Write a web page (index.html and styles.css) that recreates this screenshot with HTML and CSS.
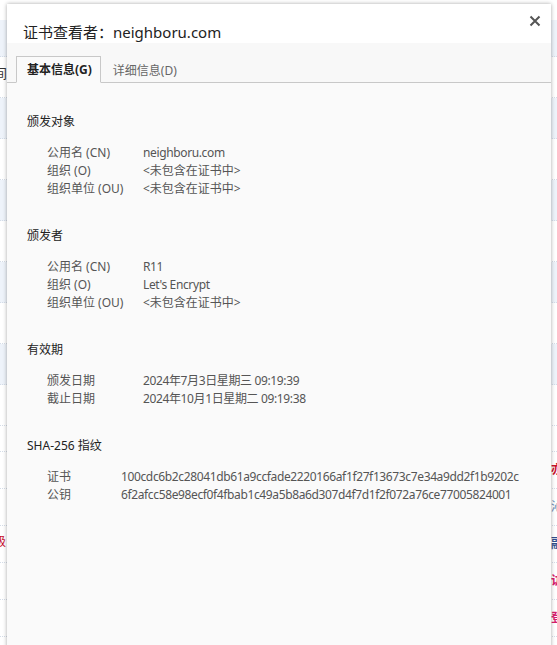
FILE: index.html
```html
<!DOCTYPE html>
<html>
<head>
  <title>证书查看者</title>
  <link rel="stylesheet" href="styles.css">
</head>
<body>
  <div class="page">
    <div class="row blue first"></div>
    <div class="row"><span class="cut">间</span></div>
    <div class="row blue"></div>
    <div class="row"></div>
    <div class="row blue"></div>
    <div class="row"></div>
    <div class="row blue"></div>
    <div class="row"></div>
    <div class="row blue"></div>
    <div class="row"></div>
    <div class="row spacer"></div>
    <div class="row small"><span class="tail red">亦</span></div>
    <div class="row small"><span class="tail blue-text">沁</span></div>
    <div class="row small"><span class="cut red">级</span><span class="tail navy">融</span></div>
    <div class="row small"><span class="tail pink">访</span></div>
    <div class="row small"><span class="tail pink">登</span></div>
  </div>

  <div class="dialog">
    <div class="dialog-head">
      <span class="title">证书查看者：neighboru.com</span>
      <svg class="close" width="12" height="12" viewBox="0 0 12 12">
        <path d="M1.5 1.5 L10.5 10.5 M10.5 1.5 L1.5 10.5" stroke="#555" stroke-width="2"/>
      </svg>
    </div>

    <div class="tabs">
      <div class="tab active">基本信息(G)</div>
      <div class="tab">详细信息(D)</div>
    </div>

    <div class="content">
      <div class="section">
        <div class="heading">颁发对象</div>
        <div class="rows">
          <div class="field"><span class="label">公用名 (CN)</span><span class="latin">neighboru.com</span></div>
          <div class="field"><span class="label">组织 (O)</span><span>&lt;未包含在证书中&gt;</span></div>
          <div class="field"><span class="label">组织单位 (OU)</span><span>&lt;未包含在证书中&gt;</span></div>
        </div>
      </div>

      <div class="section">
        <div class="heading">颁发者</div>
        <div class="rows">
          <div class="field"><span class="label">公用名 (CN)</span><span class="latin">R11</span></div>
          <div class="field"><span class="label">组织 (O)</span><span class="latin">Let's Encrypt</span></div>
          <div class="field"><span class="label">组织单位 (OU)</span><span>&lt;未包含在证书中&gt;</span></div>
        </div>
      </div>

      <div class="section">
        <div class="heading">有效期</div>
        <div class="rows">
          <div class="field"><span class="label">颁发日期</span><span class="latin">2024年7月3日星期三 09:19:39</span></div>
          <div class="field"><span class="label">截止日期</span><span class="latin">2024年10月1日星期二 09:19:38</span></div>
        </div>
      </div>

      <div class="section">
        <div class="heading">SHA-256 指纹</div>
        <div class="rows">
          <div class="field"><span class="label short">证书</span><span class="latin">100cdc6b2c28041db61a9ccfade2220166af1f27f13673c7e34a9dd2f1b9202c</span></div>
          <div class="field"><span class="label short">公钥</span><span class="latin">6f2afcc58e98ecf0f4fbab1c49a5b8a6d307d4f7d1f2f072a76ce77005824001</span></div>
        </div>
      </div>
    </div>
  </div>
</body>
</html>
```

FILE: styles.css
```css
body {
    margin: 0;
    background-color: #fff;
    font-family: "Noto Sans", "Noto Sans CJK SC", sans-serif;
    overflow: hidden;
}

.page {
    padding-top: 20px;
}

.row {
    height: 40px;
    border-bottom: 1px dotted #d5dde8;
    font-size: 13px;
    line-height: 40px;
    color: #333;
    display: flex;
    justify-content: space-between;
}

.row.first {
    height: 36px;
}

.row.spacer {
    height: 25px;
}

.row.small {
    height: 36px;
    line-height: 36px;
    font-size: 12px;
}

.row.blue {
    background-color: #eef3fa;
}

.cut {
    margin-left: -6px;
    line-height: 32px;
}

.tail {
    margin-left: auto;
    margin-right: -6px;
    font-weight: bold;
}

.red {
    color: #c8102e;
}

.blue-text {
    color: #5a7fb0;
    font-weight: normal;
}

.navy {
    color: #2f4f8f;
}

.pink {
    color: #d6206e;
}

.dialog {
    position: absolute;
    left: 7px;
    top: 4px;
    width: 544px;
    height: 720px;
    background-color: #fafafa;
    box-shadow: 0 0 4px rgba(0, 0, 0, 0.35);
}

.dialog-head {
    height: 39px;
    background-color: #fff;
    display: flex;
    justify-content: space-between;
    padding: 0 10px 0 16px;
}

.title {
    font-size: 15px;
    line-height: 24px;
    padding-top: 16px;
    color: #222;
}

.close {
    margin-top: 11px;
}

.tabs {
    height: 39px;
    background-color: #f8f8f8;
    border-bottom: 1px solid #c8c8c8;
    display: flex;
    align-items: flex-end;
    padding-left: 9px;
}

.tab {
    font-size: 12px;
    line-height: 25px;
    padding: 0 12px;
    color: #666;
    margin-bottom: -1px;
}

.tab.active {
    font-weight: bold;
    color: #222;
    padding: 1px 8px 0 10px;
    line-height: 24px;
    background-color: #fafafa;
    border: 1px solid #c8c8c8;
    border-bottom: 1px solid #fafafa;
}

.content {
    padding-left: 20px;
    padding-top: 1px;
}

.section {
    margin-top: 29px;
}

.heading {
    font-size: 12px;
    line-height: 18px;
    color: #222;
}

.rows {
    margin-top: 13px;
    padding-left: 20px;
}

.field {
    display: flex;
    font-size: 12px;
    line-height: 18px;
    color: #555;
}

.label {
    width: 96px;
    flex-shrink: 0;
}

.label.short {
    width: 74px;
}

.latin {
    letter-spacing: -0.37px;
}
```
